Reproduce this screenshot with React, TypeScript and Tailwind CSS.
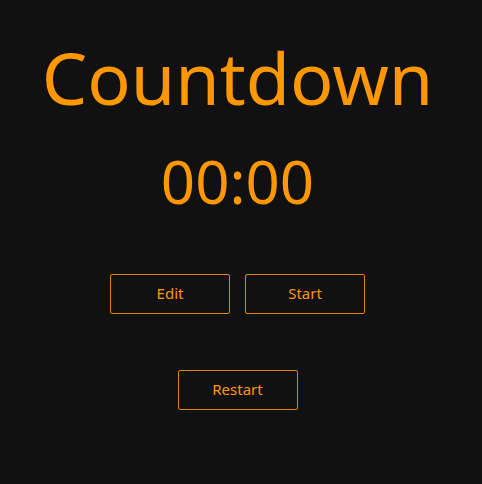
export default function App() {
  const button =
    "h-10 w-[120px] rounded-xs border border-[#e08700] pb-0.5 text-[15px] leading-5 text-[#ff9800]";
  return (
    <main className="flex min-h-screen flex-col items-center bg-[#111111] pr-[7px] pt-[23px] font-['Noto_Sans',sans-serif] text-[#ff9800]">
      <h1 className="text-[72px] leading-[108px]">Countdown</h1>
      <time className="text-[60px] leading-[100px]">00:00</time>
      <div className="mt-[43px] flex gap-[15px]">
        <button type="button" className={button}>Edit</button>
        <button type="button" className={button}>Start</button>
      </div>
      <button type="button" className={`${button} mt-14`}>Restart</button>
    </main>
  );
}
